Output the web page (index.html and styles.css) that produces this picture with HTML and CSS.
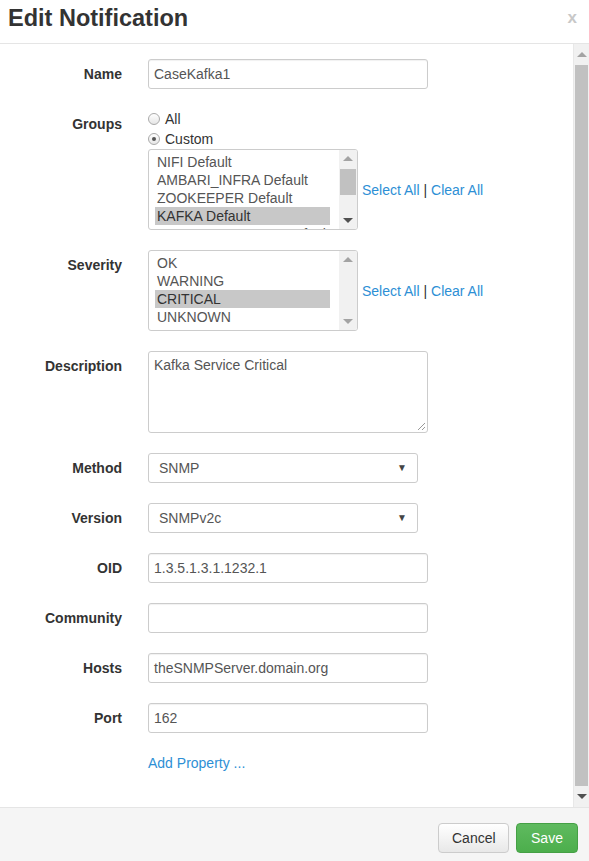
FILE: index.html
```html
<!DOCTYPE html>
<html>
<head>
<meta charset="utf-8">
<link rel="stylesheet" href="styles.css">
</head>
<body>
<div class="modal">
  <div class="modal-header">
    <h3 class="title">Edit Notification</h3>
    <span class="close">x</span>
  </div>
  <div class="modal-body">
    <div class="content">
      <div class="form">
        <div class="row">
          <label class="lbl">Name</label>
          <div class="ctl"><div class="input">CaseKafka1</div></div>
        </div>
        <div class="row">
          <label class="lbl">Groups</label>
          <div class="ctl">
            <div class="radio"><span class="rb"></span>All</div>
            <div class="radio"><span class="rb on"></span>Custom</div>
            <div class="list-row">
              <div class="listbox">
                <div class="items">
                  <div class="item">NIFI Default</div>
                  <div class="item">AMBARI_INFRA Default</div>
                  <div class="item">ZOOKEEPER Default</div>
                  <div class="item sel">KAFKA Default</div>
                  <div class="item">AMBARI_METRICS Default</div>
                </div>
                <div class="sb">
                  <span class="arr up"></span>
                  <div class="sb-track"><div class="sb-thumb"></div></div>
                  <span class="arr down"></span>
                </div>
              </div>
              <div class="links"><a>Select All</a> | <a>Clear All</a></div>
            </div>
          </div>
        </div>
        <div class="row">
          <label class="lbl">Severity</label>
          <div class="ctl">
            <div class="list-row">
              <div class="listbox sev">
                <div class="items">
                  <div class="item">OK</div>
                  <div class="item">WARNING</div>
                  <div class="item sel">CRITICAL</div>
                  <div class="item">UNKNOWN</div>
                </div>
                <div class="sb dim">
                  <span class="arr up"></span>
                  <div class="sb-track"></div>
                  <span class="arr down"></span>
                </div>
              </div>
              <div class="links"><a>Select All</a> | <a>Clear All</a></div>
            </div>
          </div>
        </div>
        <div class="row">
          <label class="lbl">Description</label>
          <div class="ctl"><div class="textarea">Kafka Service Critical<span class="grip"></span></div></div>
        </div>
        <div class="row">
          <label class="lbl">Method</label>
          <div class="ctl"><div class="select"><span>SNMP</span><span class="caret">▼</span></div></div>
        </div>
        <div class="row">
          <label class="lbl">Version</label>
          <div class="ctl"><div class="select"><span>SNMPv2c</span><span class="caret">▼</span></div></div>
        </div>
        <div class="row">
          <label class="lbl">OID</label>
          <div class="ctl"><div class="input">1.3.5.1.3.1.1232.1</div></div>
        </div>
        <div class="row">
          <label class="lbl">Community</label>
          <div class="ctl"><div class="input"></div></div>
        </div>
        <div class="row">
          <label class="lbl">Hosts</label>
          <div class="ctl"><div class="input">theSNMPServer.domain.org</div></div>
        </div>
        <div class="row">
          <label class="lbl">Port</label>
          <div class="ctl"><div class="input">162</div></div>
        </div>
        <div class="row">
          <span class="lbl"></span>
          <div class="ctl"><a class="add">Add Property ...</a></div>
        </div>
      </div>
    </div>
    <div class="page-sb">
      <span class="parr up"></span>
      <div class="page-track"><div class="page-thumb"></div></div>
      <span class="parr down"></span>
    </div>
  </div>
  <div class="modal-footer">
    <button class="btn cancel">Cancel</button>
    <button class="btn save">Save</button>
  </div>
</div>
</body>
</html>
```

FILE: styles.css
```css
* { box-sizing: border-box; }
html, body { margin: 0; padding: 0; background: #fff; }
body {
  font-family: "Liberation Sans", Arial, sans-serif;
  font-size: 14px;
  color: #333;
  width: 589px;
  height: 861px;
  overflow: hidden;
}
.modal { display: flex; flex-direction: column; height: 861px; }
.modal-header {
  height: 44px;
  border-bottom: 1px solid #e5e5e5;
  display: flex;
  align-items: center;
  justify-content: space-between;
  padding: 0 12px 0 8px;
  flex: none;
}
.title { margin: 0; font-size: 23.5px; font-weight: bold; color: #333; line-height: 1; padding-bottom: 6px; }
.close { color: #c8c8c8; font-size: 17px; font-weight: bold; padding-bottom: 8px; }
.modal-body { flex: 1; display: flex; min-height: 0; }
.content { flex: 1; padding-top: 15px; }
.form { display: flex; flex-direction: column; gap: 20px; }
.row { display: grid; grid-template-columns: 122px 280px; column-gap: 26px; align-items: start; }
.lbl { text-align: right; font-weight: bold; line-height: 30px; color: #333; }
.ctl { display: flex; flex-direction: column; }
.input, .select {
  height: 30px;
  border: 1px solid #ccc;
  border-radius: 3px;
  padding: 0 5px;
  line-height: 28px;
  color: #555;
  box-shadow: inset 0 1px 1px rgba(0,0,0,.06);
}
.select {
  width: 270px;
  padding: 0 10px;
  display: flex;
  justify-content: space-between;
  align-items: center;
  box-shadow: none;
}
.caret { font-size: 10px; color: #444; }
.radio { height: 20px; line-height: 20px; display: flex; align-items: center; color: #333; }
.rb {
  width: 12px; height: 12px; border-radius: 50%;
  border: 1px solid #aaa; background: linear-gradient(#fff, #e6e6e6);
  margin-right: 5px; position: relative; display: inline-block;
}
.rb.on::after {
  content: ""; position: absolute; left: 3px; top: 3px;
  width: 4px; height: 4px; border-radius: 50%; background: #555;
}
.list-row { display: flex; align-items: center; gap: 4px; }
.listbox {
  flex: none;
  width: 210px; height: 81px;
  border: 1px solid #ccc; border-radius: 3px;
  display: flex; overflow: hidden;
}
.items { flex: 1; min-width: 0; padding: 3px 0 0 6px; overflow: hidden; color: #555; }
.item { height: 18px; line-height: 18px; padding-left: 2px; white-space: nowrap; overflow: hidden; }
.item.sel { background: #c8c8c8; color: #333; margin-right: 9px; }
.sb { flex: none; width: 18px; background: #f1f1f1; display: flex; flex-direction: column; align-items: stretch; }
.sb-track { flex: 1; padding: 2px 1px; }
.sb-thumb { height: 26px; background: #c1c1c1; }
.arr { height: 17px; display: flex; align-items: center; justify-content: center; }
.arr::before { content: ""; border-left: 5px solid transparent; border-right: 5px solid transparent; }
.arr.up::before { border-bottom: 5px solid #a3a3a3; }
.arr.down::before { border-top: 5px solid #505050; }
.sb.dim .arr.up::before { border-bottom-color: #a3a3a3; }
.sb.dim .arr.down::before { border-top-color: #a3a3a3; }
.links { color: #333; white-space: nowrap; }
a { color: #2d8fd5; text-decoration: none; }
.textarea {
  height: 82px; border: 1px solid #ccc; border-radius: 3px;
  padding: 3px 5px; line-height: 20px; color: #555; position: relative;
}
.grip {
  position: absolute; right: 2px; bottom: 2px; width: 7px; height: 7px;
  background: linear-gradient(135deg, transparent 45%, #999 45%, #999 55%, transparent 55%, transparent 75%, #999 75%, #999 85%, transparent 85%);
}
.add { line-height: 20px; display: block; }
.page-sb { width: 16px; background: #f1f1f1; display: flex; flex-direction: column; border-left: 1px solid #e8e8e8; }
.parr { height: 21px; display: flex; align-items: center; justify-content: center; }
.parr::before { content: ""; border-left: 5px solid transparent; border-right: 5px solid transparent; }
.parr.up::before { border-bottom: 5px solid #a3a3a3; }
.parr.down::before { border-top: 5px solid #505050; }
.page-track { flex: 1; padding: 0 1px 0 1px; }
.page-thumb { height: 100%; background: #c1c1c1; }
.modal-footer {
  flex: none; height: 54px; border-top: 1px solid #e5e5e5; background: #f5f5f5;
  display: flex; justify-content: flex-end; align-items: center; gap: 7px; padding: 6px 11px 0 0;
}
.btn {
  font-family: "Liberation Sans", Arial, sans-serif; font-size: 14px;
  height: 30px; border-radius: 4px; padding: 0 13px; cursor: pointer;
}
.cancel { background: linear-gradient(#fff, #e8e8e8); border: 1px solid #ccc; color: #333; width: 71px; }
.save { background: linear-gradient(#5fba5f, #4cae4c); border: 1px solid #45a045; color: #fff; width: 62px; }
```
